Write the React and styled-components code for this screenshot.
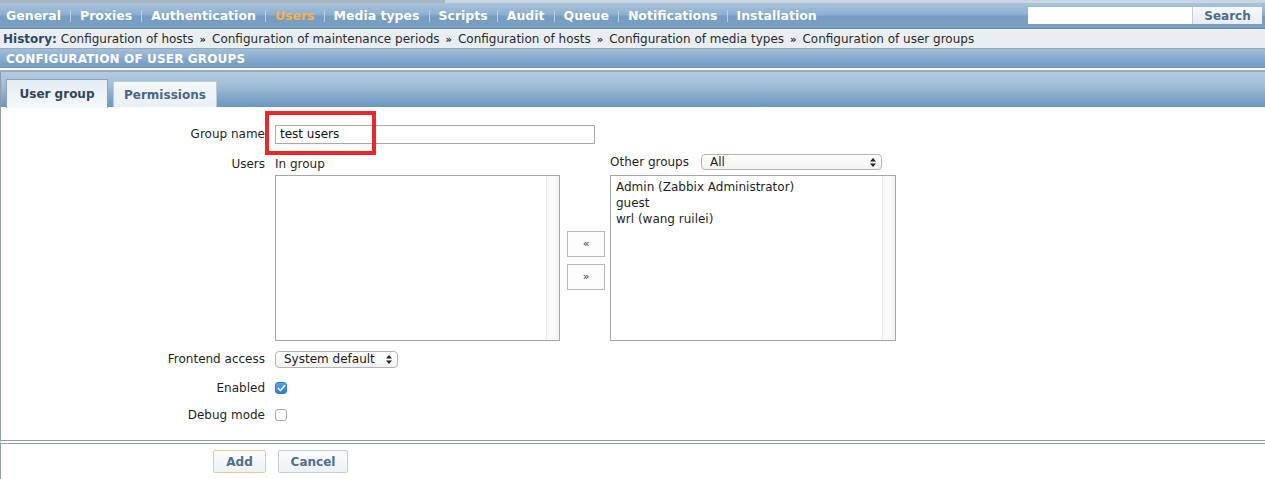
import React from "react";
import styled, { createGlobalStyle } from "styled-components";

const Global = createGlobalStyle`
  html, body { margin: 0; padding: 0; background: #ffffff; }
  body { font-family: "DejaVu Sans", Verdana, sans-serif; font-size: 12px; color: #1f1f1f; }
  * { box-sizing: border-box; }
`;

const Page = styled.div`
  width: 1265px;
  height: 479px;
  overflow: hidden;
  display: flex;
  flex-direction: column;
`;

const TopStrip = styled.div`
  height: 3px;
  background: linear-gradient(90deg, #aab6c2 0, #aab6c2 445px, #c9d6e2 445px);
`;

const MenuBar = styled.div`
  height: 26px;
  display: flex;
  align-items: center;
  padding-left: 6px;
  background: linear-gradient(#a9c3dc 0%, #8db0d1 45%, #769cc2 55%, #7aa0c5 100%);
  border-bottom: 1px solid #5f87ad;
`;

const MenuItem = styled.span`
  font-weight: bold;
  font-size: 12.5px;
  color: ${(p) => (p.$active ? "#f6b24a" : "#ffffff")};
`;

const MenuSep = styled.span`
  width: 1px;
  height: 12px;
  background: #c8d8e8;
  margin: 0 9px;
  opacity: 0.8;
`;

const SearchWrap = styled.div`
  margin-left: auto;
  margin-right: 3px;
  display: flex;
  height: 17px;
`;

const SearchInput = styled.div`
  width: 165px;
  background: #ffffff;
  border-right: 1px solid #c6ced6;
`;

const SearchBtn = styled.div`
  width: 69px;
  background: linear-gradient(#f7f8f9, #e9ecef);
  color: #4e6c8e;
  font-weight: bold;
  font-size: 12px;
  display: flex;
  align-items: center;
  justify-content: center;
`;

const HistoryBar = styled.div`
  height: 20px;
  display: flex;
  align-items: center;
  padding-left: 3px;
  background: #e9eef3;
  border-top: 1px solid #f4f7fa;
  border-bottom: 1px solid #95a7b8;
  font-size: 12px;
  color: #2a2a2a;
  white-space: nowrap;
`;

const HistLabel = styled.span`
  font-weight: bold;
  color: #2f4a66;
  margin-right: 4px;
`;

const Raquo = styled.span`
  font-size: 10px;
  font-weight: bold;
  margin: 0 6px;
`;

const Header = styled.div`
  height: 19px;
  display: flex;
  align-items: center;
  padding-left: 6px;
  background: linear-gradient(#a2bfd9 0%, #86aace 50%, #6f98c0 100%);
  color: #ffffff;
  font-weight: bold;
  font-size: 12px;
  letter-spacing: 0.15px;
`;

const Divider = styled.div`
  height: 4px;
  border-top: 2px solid #ffffff;
  border-bottom: 2px solid #9aa9b6;
`;

const TabBar = styled.div`
  height: 35px;
  display: flex;
  align-items: flex-end;
  gap: 5px;
  padding-left: 5px;
  border-left: 1px solid #8d9dab;
  background: linear-gradient(#b3cbe1 0%, #a0bdd8 40%, #7fa5c9 75%, #6d97c0 100%);
`;

const Tab = styled.div`
  height: ${(p) => (p.$active ? "29px" : "26px")};
  margin-bottom: ${(p) => (p.$active ? "-1px" : "0")};
  padding: 0 ${(p) => (p.$active ? "12.5px" : "10px")};
  display: flex;
  align-items: center;
  font-weight: bold;
  font-size: 12px;
  color: ${(p) => (p.$active ? "#2e4660" : "#4a6788")};
  background: ${(p) =>
    p.$active ? "linear-gradient(#e3ebf3, #f6f9fb)" : "linear-gradient(#f4f7fa, #e9eff5)"};
  border: 1px solid ${(p) => (p.$active ? "#8ea2b6" : "#bccbd9")};
  border-bottom: none;
  position: relative;
  z-index: 1;
`;

const FormPanel = styled.div`
  position: relative;
  height: 333px;
  border-left: 1px solid #8d9dab;
  background: #ffffff;
  padding-top: 16px;
`;

const Row = styled.div`
  display: flex;
  align-items: ${(p) => (p.$top ? "flex-start" : "center")};
  margin-top: ${(p) => p.$mt || 0}px;
  min-height: ${(p) => p.$h || 0}px;
`;

const Label = styled.div`
  width: 264px;
  text-align: right;
  font-size: 12px;
  color: #1f1f1f;
  flex-shrink: 0;
  margin-top: ${(p) => p.$mt || 0}px;
`;

const Control = styled.div`
  margin-left: 10px;
  display: flex;
  align-items: center;
`;

const TextInput = styled.div`
  width: 320px;
  height: 19px;
  border: 1px solid #a9a9a9;
  padding-left: 4px;
  display: flex;
  align-items: center;
  font-size: 12px;
  color: #111;
`;

const Annot = styled.div`
  position: absolute;
  left: 264px;
  top: 4px;
  width: 111px;
  height: 44px;
  border: 4px solid #e8282b;
  pointer-events: none;
`;

const UsersGrid = styled.div`
  margin-left: 10px;
  display: grid;
  grid-template-columns: 285px 50px 286px;
  grid-template-rows: 21px 166px;
`;

const ColHead = styled.div`
  display: flex;
  align-items: center;
  gap: 12px;
  font-size: 12px;
  align-self: start;
  margin-top: ${(p) => p.$mt || 0}px;
`;

const ListBox = styled.div`
  position: relative;
  border: 1px solid #a6a6a6;
  background: #ffffff;
  padding: 3px 0 0 5px;
  font-size: 12px;
  line-height: 16px;
  &::after {
    content: "";
    position: absolute;
    top: 0;
    right: 0;
    bottom: 0;
    width: 12px;
    border-left: 1px solid #e8e8e8;
    background: linear-gradient(90deg, #f7f7f7, #fbfbfb 50%, #f2f2f2);
  }
`;

const MoveCol = styled.div`
  display: flex;
  flex-direction: column;
  justify-content: center;
  padding-left: 7px;
  gap: 7px;
  padding-top: 4px;
`;

const MoveBtn = styled.div`
  width: 38px;
  height: 26px;
  border: 1px solid #b7b7b7;
  background: #fdfdfd;
  display: flex;
  align-items: center;
  justify-content: center;
  font-size: 11px;
  color: #333;
`;

const Select = styled.div`
  width: ${(p) => p.$w}px;
  height: ${(p) => p.$hh || 16}px;
  border: 1px solid #b4b4b4;
  border-radius: 4px;
  background: linear-gradient(#ffffff, #f3f3f3);
  display: flex;
  align-items: center;
  padding: 0 5px 0 8px;
  font-size: 12px;
  color: #1a1a1a;
  justify-content: space-between;
`;

const Arrows = () => (
  <svg width="6" height="9" viewBox="0 0 6 9">
    <path d="M3 0 L6 3.5 L0 3.5 Z" fill="#222" />
    <path d="M0 5.5 L6 5.5 L3 9 Z" fill="#222" />
  </svg>
);

const CheckBox = styled.div`
  width: 12px;
  height: 12px;
  border-radius: 3px;
  border: 1px solid ${(p) => (p.$on ? "#2f7fd8" : "#a8a8a8")};
  background: ${(p) => (p.$on ? "linear-gradient(#5aa2ee, #2d7ad4)" : "#ffffff")};
  display: flex;
  align-items: center;
  justify-content: center;
`;

const Footer = styled.div`
  flex: 1;
  border-left: 1px solid #8d9dab;
  border-top: 4px double #8f9ea9;
  display: flex;
  align-items: flex-start;
  padding: 6px 0 0 212px;
  gap: 12px;
`;

const FootBtn = styled.div`
  width: ${(p) => p.$w}px;
  height: 23px;
  border: 1px solid ${(p) => (p.$primary ? "#f1c79a" : "#c4ccd4")};
  border-radius: 2px;
  background: linear-gradient(#fbfcfd, #eef2f5);
  display: flex;
  align-items: center;
  justify-content: center;
  font-weight: bold;
  font-size: 12px;
  color: #4f6e92;
`;

const menu = [
  "General",
  "Proxies",
  "Authentication",
  "Users",
  "Media types",
  "Scripts",
  "Audit",
  "Queue",
  "Notifications",
  "Installation",
];

const history = [
  "Configuration of hosts",
  "Configuration of maintenance periods",
  "Configuration of hosts",
  "Configuration of media types",
  "Configuration of user groups",
];

export default function App() {
  return (
    <Page>
      <Global />
      <TopStrip />
      <MenuBar>
        {menu.map((m, i) => (
          <React.Fragment key={m}>
            {i > 0 && <MenuSep />}
            <MenuItem $active={m === "Users"}>{m}</MenuItem>
          </React.Fragment>
        ))}
        <SearchWrap>
          <SearchInput />
          <SearchBtn>Search</SearchBtn>
        </SearchWrap>
      </MenuBar>
      <HistoryBar>
        <HistLabel>History:</HistLabel>
        {history.map((h, i) => (
          <React.Fragment key={i}>
            {i > 0 && <Raquo>»</Raquo>}
            <span>{h}</span>
          </React.Fragment>
        ))}
      </HistoryBar>
      <Header>CONFIGURATION OF USER GROUPS</Header>
      <Divider />
      <TabBar>
        <Tab $active>User group</Tab>
        <Tab>Permissions</Tab>
      </TabBar>
      <FormPanel>
        <Annot />
        <Row $h={22}>
          <Label>Group name</Label>
          <Control>
            <TextInput>test users</TextInput>
          </Control>
        </Row>
        <Row $top $mt={9}>
          <Label $mt={3}>Users</Label>
          <UsersGrid>
            <ColHead $mt={3}>In group</ColHead>
            <div />
            <ColHead>
              Other groups
              <Select $w={181}>
                <span>All</span>
                <Arrows />
              </Select>
            </ColHead>
            <ListBox />
            <MoveCol>
              <MoveBtn>«</MoveBtn>
              <MoveBtn>»</MoveBtn>
            </MoveCol>
            <ListBox>
              <div>Admin (Zabbix Administrator)</div>
              <div>guest</div>
              <div>wrl (wang ruilei)</div>
            </ListBox>
          </UsersGrid>
        </Row>
        <Row $mt={8} $h={20}>
          <Label>Frontend access</Label>
          <Control>
            <Select $w={123} $hh={17}>
              <span>System default</span>
              <Arrows />
            </Select>
          </Control>
        </Row>
        <Row $mt={9} $h={20}>
          <Label>Enabled</Label>
          <Control>
            <CheckBox $on>
              <svg width="9" height="8" viewBox="0 0 9 8">
                <path d="M1 4.2 L3.5 6.5 L8 1.2" stroke="#fff" strokeWidth="1.6" fill="none" />
              </svg>
            </CheckBox>
          </Control>
        </Row>
        <Row $mt={7} $h={20}>
          <Label>Debug mode</Label>
          <Control>
            <CheckBox />
          </Control>
        </Row>
      </FormPanel>
      <Footer>
        <FootBtn $w={53} $primary>Add</FootBtn>
        <FootBtn $w={70}>Cancel</FootBtn>
      </Footer>
    </Page>
  );
}
